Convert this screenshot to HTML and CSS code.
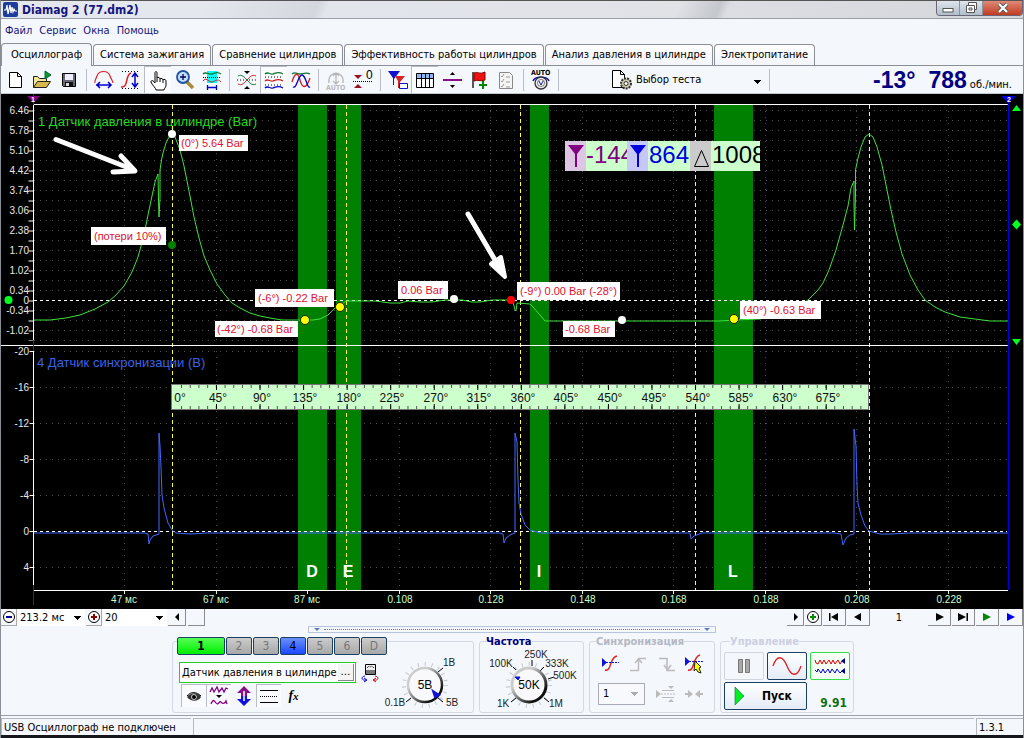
FILE: index.html
```html
<!DOCTYPE html>
<html lang="ru">
<head>
<meta charset="utf-8">
<title>Diamag 2 (77.dm2)</title>
<link rel="stylesheet" href="styles.css">
</head>
<body>
<div class="app">
  <header class="titlebar">
    <svg class="logo" viewBox="0 0 15 15"><rect width="15" height="15" rx="2" fill="#1c3d9c"/><path d="M1 8h2l1-5 1 9 2-9 1 8 1-6 1 5 1-3 1 2h2" fill="none" stroke="#fff" stroke-width="1.2"/></svg>
    <h1>Diamag 2 (77.dm2)</h1>
    <div class="winbtns">
      <button aria-label="Свернуть"><svg viewBox="0 0 12 12"><rect x="1" y="6.500" width="10" height="3.500" fill="#fff" stroke="#555"/></svg></button>
      <button aria-label="Развернуть"><svg viewBox="0 0 12 12"><path d="M3.500 .5h8v7h-8z" fill="#fff" stroke="#555"/><path d="M1.500 3.500h8v7h-8z" fill="#fff" stroke="#555"/><path d="M4 6h3v2H4z" fill="#fff" stroke="#555"/></svg></button>
      <button class="close" aria-label="Закрыть"><svg viewBox="0 0 12 12"><path d="M2 2l8 8M10 2l-8 8" stroke="#555" stroke-width="4"/><path d="M2 2l8 8M10 2l-8 8" stroke="#fff" stroke-width="2.200"/></svg></button>
    </div>
  </header>
  <nav class="menu"><a href="#">Файл</a><a href="#">Сервис</a><a href="#">Окна</a><a href="#">Помощь</a></nav>
  <div class="tabs" role="tablist">
    <button role="tab" aria-selected="true" class="active">Осциллограф</button>
    <button role="tab">Система зажигания</button>
    <button role="tab">Сравнение цилиндров</button>
    <button role="tab">Эффективность работы цилиндров</button>
    <button role="tab">Анализ давления в цилиндре</button>
    <button role="tab">Электропитание</button>
  </div>
  <div class="toolbar">
    <button aria-label="Новый"><svg viewBox="0 0 22 22"><path d="M5.500 3.500h8l4 4v11h-12z" fill="#fff" stroke="#000"/><path d="M13.500 3.500v4h4" fill="none" stroke="#000"/></svg></button>
    <button aria-label="Открыть"><svg viewBox="0 0 22 22"><path d="M2.500 18.500v-11h4l2 2h7v3" fill="#f4e59a" stroke="#222"/><path d="M2.500 18.500l4-6h13l-4 6z" fill="#d8b84c" stroke="#222"/><path d="M14 2l6 4-6 4z" fill="#0a9a20" stroke="#064"/></svg></button>
    <button aria-label="Сохранить"><svg viewBox="0 0 22 22"><path d="M4.500 4.500h13v13h-12l-1-1z" fill="#667" stroke="#000"/><path d="M7 5h8v6H7z" fill="#eef"/><path d="M7 13h8v4H7z" fill="#111"/><path d="M8 14h3v3H8z" fill="#ddd"/></svg></button>
    <span class="sep"></span>
    <button aria-label="Ширина"><svg viewBox="0 0 22 22"><path d="M2 14C1 12 3 10 4 7 6 1 15 1 17 7c1 3 3 5 3 7" fill="none" stroke="#d22" stroke-width="1.200"/><path d="M3 16h15M7 13l-3 3 3 3M15 13l3 3-3 3" fill="none" stroke="#00c" stroke-width="1.500"/></svg></button>
    <button aria-label="Высота"><svg viewBox="0 0 22 22"><path d="M1 18c8 1 4-13 10-14" fill="none" stroke="#d22" stroke-width="1.500"/><path d="M2 2.500h18M2 19.500h18" stroke="#000" stroke-dasharray="1 2"/><path d="M15 4v14M12 8l3-4 3 4M12 14l3 4 3-4" fill="none" stroke="#00c" stroke-width="1.500"/></svg></button>
    <button class="on" aria-label="Рука"><svg viewBox="0 0 22 22"><path d="M8 12V4c0-2 2-2 2 0v5c0-1 3-1 3 1 0-1 3-1 3 1 0-1 3-1 3 1v4c0 3-2 3-2 5H9c0-2-4-5-5-8 0-2 2-2 4 1zM10 9v4M13 10v3M16 11v3" fill="#fff" stroke="#000"/></svg></button>
    <button aria-label="Лупа"><svg viewBox="0 0 22 22"><path d="M13 13l6 6" stroke="#a88b3a" stroke-width="3.500"/><circle cx="9" cy="8" r="6" fill="#bfe0ff" stroke="#22509c" stroke-width="1.800"/><path d="M9 5v6M6 8h6" stroke="#005" stroke-width="1.300"/></svg></button>
    <button aria-label="Область"><svg viewBox="0 0 22 22"><path d="M6 2h10v12H6z" fill="#0ff"/><path d="M2 5c3-3 5 1 9 0s5-3 9 0" fill="none" stroke="#173" stroke-width="1.300"/><path d="M2 8.500h18" stroke="#000" stroke-dasharray="1 1"/><path d="M2 12c3-4 5 0 8 1s6-5 10 0" fill="none" stroke="#c22"/><path d="M6.500 16v5M15.500 16v5M7 18.500h8" stroke="#00c" stroke-width="1.300"/></svg></button>
    <span class="sep"></span>
    <button aria-label="Свести"><svg viewBox="0 0 22 22"><path d="M8 2h6l-3 3zM8 20h6l-3-3z" fill="#000"/><path d="M1 11h20" stroke="#000" stroke-dasharray="1 2"/><path d="M2 7c4-2 6 1 9 4s5 6 9 4" fill="none" stroke="#173"/><path d="M2 15c4 2 6-1 9-4s5-6 9-4" fill="none" stroke="#c22"/></svg></button>
    <button class="on" aria-label="Раздельно"><svg viewBox="0 0 22 22"><path d="M2 5c3-3 5 1 8 0s5-3 10 0" fill="none" stroke="#173" stroke-width="1.300"/><path d="M2 8h18M2 16h18" stroke="#000" stroke-dasharray="1 2"/><path d="M2 12c3-3 5 1 8 0s5-3 10 0" fill="none" stroke="#c22" stroke-width="1.300"/><path d="M2 19c3-3 5 1 8 0s5-3 10 0" fill="none" stroke="#00c" stroke-width="1.300"/></svg></button>
    <button aria-label="Вместе"><svg viewBox="0 0 22 22"><path d="M2 5c3-3 5 0 8 0s6-2 10 0" fill="none" stroke="#173" stroke-width="1.300"/><path d="M2 13c3-10 6-10 8-2s6 10 10-2" fill="none" stroke="#c22" stroke-width="1.300"/><path d="M3 18c4 2 5-12 9-12s5 14 8 12" fill="none" stroke="#00c" stroke-width="1.300"/></svg></button>
    <span class="sep"></span>
    <button aria-label="Авто" disabled><svg viewBox="0 0 22 22"><path d="M4 14C2 1 20 1 18 14M11 4v10M8 7l3-3 3 3M8 12l3 3 3-3" fill="none" stroke="#b9b9b9" stroke-width="1.300"/><text x="1" y="21" class="auto grey">AUTO</text></svg></button>
    <button aria-label="Ноль"><svg viewBox="0 0 22 22"><path d="M2 6h8l-4 4zM2 19h8l-4-4z" fill="#912"/><path d="M1 12.500h20" stroke="#000" stroke-dasharray="1 1"/><text x="14" y="10" class="zero">0</text></svg></button>
    <span class="sep"></span>
    <button aria-label="Маркеры"><svg viewBox="0 0 22 22"><path d="M1 2h12L7 10v6h-1v-7z" fill="#11c"/><path d="M8 7h10l-5 6v6h-2v-7z" fill="#d22"/><path d="M12.500 14.500h8v5h-8z" fill="#fff" stroke="#11c"/></svg></button>
    <button class="on" aria-label="Таблица"><svg viewBox="0 0 22 22"><path d="M2.500 4.500h17v14h-17z" fill="#fff" stroke="#000"/><path d="M3 5h16v4H3z" fill="#8db8f0"/><path d="M2 9.500h18M7.500 5v14M11.500 5v14M15.500 5v14" stroke="#000"/></svg></button>
    <button aria-label="Линия"><svg viewBox="0 0 22 22"><path d="M9 6h5l-2.500-3zM9 16h5l-2.500 3z" fill="#000"/><path d="M2 11h19" stroke="#818" stroke-width="2"/></svg></button>
    <button aria-label="Флаг"><svg viewBox="0 0 22 22"><path d="M5 3v16" stroke="#222" stroke-width="1.500"/><path d="M6 4c4-2 5 2 11-1v8c-5 2-7-1-11 1z" fill="#e11" stroke="#800"/><path d="M15 12v8M11 16h8" stroke="#080" stroke-width="2"/></svg></button>
    <button aria-label="Отчёт" disabled><svg viewBox="0 0 22 22"><path d="M4.500 3.500h10l3 3v13h-13z" fill="#f5f5f5" stroke="#888"/><path d="M6 7l1 1 2-3M6 12l1 1 2-3M6 17l1 1 2-3M11 8h4M11 13h4M11 18h4" fill="none" stroke="#999"/></svg></button>
    <span class="sep"></span>
    <button aria-label="Автонастройка"><svg viewBox="0 0 22 22"><text x="1" y="6" class="auto">AUTO</text><path d="M3 12c2-5 14-5 16 0" fill="none" stroke="#11c" stroke-width="1.500"/><circle cx="11" cy="14" r="6" fill="#eee" stroke="#333" stroke-width="1.300"/><circle cx="11" cy="14" r="3.500" fill="#fff" stroke="#555" stroke-width=".8"/><path d="M9 12l2 4 2-4" fill="none" stroke="#118"/></svg></button>
    <span class="sep"></span>
    <label class="test">
      <svg viewBox="0 0 22 22"><path d="M1.500 1.500h8l4 4v13h-12z" fill="#fff" stroke="#000"/><path d="M9.500 1.500v4h4" fill="none" stroke="#000"/><circle cx="15" cy="14.500" r="5" fill="#ccc9a8" stroke="#333" stroke-width="2" stroke-dasharray="2 1"/><circle cx="15" cy="14.500" r="2" fill="#fff" stroke="#333"/></svg>
      <select aria-label="Тест"><option>Выбор теста</option></select>
    </label>
    <span class="sep"></span>
    <output class="rpm"><b>-13°</b><b>788</b><span>об./мин.</span></output>
  </div>

  <svg class="plot" viewBox="1 94 1022 515" role="img" aria-label="Осциллограмма">
    <rect x="1" y="94" width="1022" height="515" fill="#000"/>
    <g class="grid">
      <path d="M34 110.500H1007M34 120.500H1007M34 130.500H1007M34 140.500H1007M34 150.500H1007M34 160.500H1007M34 170.500H1007M34 180.500H1007M34 190.500H1007M34 200.500H1007M34 210.500H1007M34 220.500H1007M34 230.500H1007M34 240.500H1007M34 250.500H1007M34 260.500H1007M34 270.500H1007M34 280.500H1007M34 290.500H1007M34 310.500H1007M34 320.500H1007M34 330.500H1007M34 340.500H1007"/>
      <path d="M34 351.500H1007M34 387.500H1007M34 423.500H1007M34 459.500H1007M34 495.500H1007M34 567.500H1007"/>
      <path d="M124.500 105V590M216.500 105V590M307.500 105V590M399.500 105V590M490.500 105V590M582.500 105V590M673.500 105V590M765.500 105V590M856.500 105V590M948.500 105V590"/>
    </g>
    <path d="M298 105h29v485h-29zM336 105h25v485h-25zM530 105h19v485h-19zM714 105h39v485h-39z" fill="#008000"/>
    <text x="38" y="126" class="ch ch1">1 Датчик давления в цилиндре (Bar)</text>
    <text x="37" y="367" class="ch ch4">4 Датчик синхронизации (В)</text>
    <path class="cursors" d="M172.500 105V590M346.500 105V590M520.500 105V590M695.500 105V590M869.500 105V590"/>
    <path class="zeroline" d="M34 300.500H1007M34 531.500H1007"/>
    <path class="trace t1" d="M34 320H50L66 318 80 315 95 309 108 302 116 295 124 286 132 272 138 257 144 235 148 215 152 196 155 182 158 174 158.500 200 159 217 160 198V170L161.500 160 163 153 166 143 169 137 172 134 175 137 180 150 184 166 189 191 194 217 199 238 204 256 210 270 217 284 225 295 232 303 240 308 250 313 260 316 270 318 282 320H313L320 319 328 315 335 308 342 304 346 301H375L390 303 400 303 408 301 420 302H432L445 300H462L472 302H480L492 300H510L513 302 515 310 516 311 517 303 530 304 533 307 540 315 545 321H614L640 321H720L735 320 760 319 780 313 800 305 808 300 818 290 823 283 829 270 836 250 843 225 848 206 851 188 854 181V203L854.500 230 855.500 195 855.500 170 858 158 861 147 865 137 869 134 873 137 877 147 882 165 886 185 891 210 896 232 902 254 910 275 918 290 925 300 935 307 945 312 960 317 975 319 990 321H1008"/>
    <path class="trace t4" d="M34 533H145L148 534 149 544 150 540 153 536 159 534V433L160 446 161 467 162 495 164 508 168 523 172 530 176 533 190 534 207 533H500L503 534 504 543 506 538 510 535 515 533V433L517 442 518 480 519 503 521 514 525 525 530 530 540 533H690L691 539 694 536 702 533H835L841 534 843 545 846 538 850 535 854 534V429L856 446 857 485 858 503 861 515 865 526 869 531 880 534H890L910 533H1008"/>
    <path d="M33.500 105V590.500M33 590.500H1008M33 104.500H1008M1 345.500H1008" stroke="#fff" fill="none"/>
    <path d="M31 110.500V341" stroke="#fff" stroke-width="5" stroke-dasharray="1 9"/>
    <path d="M31.500 351V568" stroke="#fff" stroke-width="4" stroke-dasharray="1 35"/>
    <path d="M33.500 94V105M33.500 340v11M33.500 585v20" stroke="#800080"/>
    <path d="M1008.500 100V590" stroke="#0000d8" stroke-width="1.500"/>
    <path d="M27 96h13l-6.500 7z" fill="#800080"/><text x="31" y="102" class="flag">1</text>
    <path d="M1001 96h15l-7.500 7z" fill="#0000e0"/><text x="1007" y="102" class="flag">2</text>
    <path d="M1012 111h9l-4.500-6zM1012 339h9l-4.500 6zM1016.500 219.500l4.500 5-4.500 5-4.500-5z" fill="#00ff20"/>
    <circle cx="8.500" cy="300" r="4" fill="#00ff20"/>
    <g class="yaxis">
      <text x="29" y="114">6.46</text><text x="29" y="134">5.78</text><text x="29" y="154">5.10</text><text x="29" y="174">4.42</text><text x="29" y="194">3.74</text><text x="29" y="214">3.06</text><text x="29" y="234">2.38</text><text x="29" y="254">1.70</text><text x="29" y="274">1.02</text><text x="29" y="294">0.34</text><text x="29" y="304">0</text><text x="29" y="314">-0.34</text><text x="29" y="334">-1.02</text>
      <text x="29" y="355">-20</text><text x="29" y="391">-16</text><text x="29" y="427">-12</text><text x="29" y="463">-8</text><text x="29" y="499">-4</text><text x="29" y="535">0</text><text x="29" y="571">4</text>
    </g>
    <path d="M124.500 591v3M216.500 591v3M307.500 591v3M399.500 591v3M490.500 591v3M582.500 591v3M673.500 591v3M765.500 591v3M856.500 591v3M948.500 591v3" stroke="#ccffcc"/>
    <g class="xaxis">
      <text x="124" y="603">47 мс</text><text x="216" y="603">67 мс</text><text x="307" y="603">87 мс</text><text x="400" y="603">0.108</text><text x="491" y="603">0.128</text><text x="583" y="603">0.148</text><text x="674" y="603">0.168</text><text x="766" y="603">0.188</text><text x="857" y="603">0.208</text><text x="949" y="603">0.228</text>
    </g>
    <g class="phase"><text x="312" y="577">D</text><text x="348" y="577">E</text><text x="539" y="577">I</text><text x="733" y="577">L</text></g>
    <rect x="171.500" y="384.500" width="697" height="25" fill="#ccffcc" stroke="#777"/>
    <path d="M181 386.500H868M181 407.500H868" stroke="#555" stroke-width="3" stroke-dasharray="1 7.710"/>
    <path d="M216 387.500H868M216 406.500H868" stroke="#000" stroke-width="5" stroke-dasharray="1 42.550"/>
    <g class="ruler">
      <text x="180" y="402">0°</text><text x="218" y="402">45°</text><text x="262" y="402">90°</text><text x="305" y="402">135°</text><text x="349" y="402">180°</text><text x="392" y="402">225°</text><text x="436" y="402">270°</text><text x="479" y="402">315°</text><text x="523" y="402">360°</text><text x="566" y="402">405°</text><text x="610" y="402">450°</text><text x="654" y="402">495°</text><text x="698" y="402">540°</text><text x="741" y="402">585°</text><text x="785" y="402">630°</text><text x="828" y="402">675°</text>
    </g>
    <rect x="565" y="141" width="195" height="30" fill="#ccffcc"/>
    <path d="M565 141h21v30h-21z" fill="#dcc6e4"/><path d="M627 141h21v30h-21z" fill="#c8c8f8"/><path d="M690 141h21v30h-21z" fill="#cbcbcb"/>
    <path d="M568 145h16l-7 9v13h-2v-13z" fill="#800080"/><path d="M630 145h16l-7 9v13h-2v-13z" fill="#0000e0"/><path d="M694.500 166.500l7-16 7 16z" fill="none" stroke="#000"/>
    <svg x="586" y="141" width="41" height="30"><text x="0" y="22" class="meas m1">-144</text></svg>
    <text x="649" y="163" class="meas m2">864</text>
    <svg x="712" y="141" width="48" height="30"><text x="0" y="22" class="meas">1008</text></svg>
    <g fill="#fff">
      <path d="M179 135h69v16h-69zM91 227h75v18H91zM255 289h79v18h-79zM215 321h83v16h-83zM398 281h50v18h-50zM517 282h103v18H517zM563 321h52v16h-52zM740 301h81v18h-81z"/>
    </g>
    <g class="call">
      <text x="181" y="147">(0°) 5.64 Bar</text><text x="94" y="240">(потери 10%)</text><text x="258" y="302">(-6°) -0.22 Bar</text><text x="217" y="333">(-42°) -0.68 Bar</text><text x="401" y="294">0.06 Bar</text><text x="520" y="295">(-9°) 0.00 Bar (-28°)</text><text x="565" y="333">-0.68 Bar</text><text x="743" y="314">(40°) -0.63 Bar</text>
    </g>
    <g fill="#fff"><circle cx="172" cy="134" r="4"/><circle cx="454" cy="299" r="4"/><circle cx="622" cy="320" r="4"/></g>
    <circle cx="172" cy="245" r="4" fill="#008000"/><circle cx="511" cy="300" r="4" fill="#f00"/>
    <g fill="#ff0" stroke="#220"><circle cx="305" cy="320" r="4.500"/><circle cx="340" cy="307" r="4.500"/><circle cx="734" cy="319" r="4.500"/></g>
    <g stroke="#fff" stroke-width="5" stroke-linecap="round" stroke-linejoin="round" fill="none">
      <path d="M56 139.500L134 170M121 156l14 15-22 1"/>
      <path d="M468 214l34 58" /><path d="M491 264l14 13-4-20z" fill="#fff" stroke-width="4"/>
    </g>
  </svg>

  <div class="nav">
    <button class="flat" aria-label="Сжать"><svg viewBox="0 0 14 14"><circle cx="7" cy="7" r="5.500" fill="#fff" stroke="#000"/><path d="M4 7h6" stroke="#008" stroke-width="2"/></svg></button>
    <select class="w1" aria-label="Длительность"><option>213.2 мс</option></select>
    <button class="flat" aria-label="Растянуть"><svg viewBox="0 0 14 14"><circle cx="7" cy="7" r="5.500" fill="#fff" stroke="#000"/><path d="M4 7h6M7 4v6" stroke="#800" stroke-width="2"/></svg></button>
    <select class="w2" aria-label="Шаг"><option>20</option></select>
    <button class="sb" aria-label="Влево"><svg viewBox="0 0 14 14"><path d="M9 3v8L5 7z"/></svg></button>
    <button class="sb" aria-label="Положение"></button>
    <span class="grow"></span>
    <button class="sb" aria-label="Вправо"><svg viewBox="0 0 14 14"><path d="M6 3v8l4-4z"/></svg></button>
    <button class="sb" aria-label="Добавить"><svg viewBox="0 0 14 14"><circle cx="7" cy="7" r="5.500" fill="#fff" stroke="#000"/><path d="M4 7h6M7 4v6" stroke="#080" stroke-width="2"/></svg></button>
    <button class="sb wide" aria-label="Начало"><svg viewBox="0 0 14 14"><path d="M2 3h1.500v8H2zM11 3v8L4 7z"/></svg></button>
    <button class="sb wide" aria-label="Назад"><svg viewBox="0 0 14 14"><path d="M10 3v8L3 7z"/></svg></button>
    <output class="page">1</output>
    <button class="sb wide" aria-label="Вперёд"><svg viewBox="0 0 14 14"><path d="M4 3v8l8-4z"/></svg></button>
    <button class="sb wide" aria-label="Конец"><svg viewBox="0 0 14 14"><path d="M12 3h-1.500v8H12zM2 3v8l8-4z"/></svg></button>
    <button class="sb wide" aria-label="Пуск просмотра"><svg viewBox="0 0 14 14"><path d="M3 3v8l8-4z" fill="#080"/></svg></button>
    <button class="sb wide" aria-label="Просмотр"><svg viewBox="0 0 14 14"><path d="M3 3v8l8-4z" fill="#00e"/></svg></button>
  </div>
  <div class="splitter"><i></i><span></span><i></i></div>

  <div class="panels">
    <section class="group channels">
      <div class="chcol">
        <div class="chbtns"><button class="c1">1</button><button>2</button><button>3</button><button class="c4">4</button><button>5</button><button>6</button><button>D</button></div>
        <div class="sensor">
          <div class="field"><input type="text" aria-label="Датчик" value="Датчик давления в цилиндре"><button aria-label="Выбрать">…</button></div>
          <svg viewBox="0 0 18 20"><path d="M4.500 1.500h10v10h-10z" fill="#eee" stroke="#000"/><path d="M5 7h9v4H5z" fill="#777"/><path d="M6 5l2-2 1 1 2-1 2 2" fill="none" stroke="#000" stroke-dasharray="1 1"/><path d="M4 13c-5 1-3 5 1 4M3 15l3 2-3 2" fill="none" stroke="#00c"/><path d="M14 13c5 1 3 5-1 4M15 15l-3 2 3 2" fill="none" stroke="#d00"/></svg>
        </div>
        <div class="tools">
          <button class="on" aria-label="Показать"><svg viewBox="0 0 22 22"><path d="M4 12c4-5 11-5 14 0-3 5-10 5-14 0z" fill="#333"/><path d="M4 11c4-5 10-4 14 0" fill="none" stroke="#000"/><circle cx="11" cy="12" r="2.500" stroke="#ccc"/></svg></button>
          <button class="on" aria-label="Фильтр"><svg viewBox="0 0 22 22"><path d="M2 7l2-4 2 4 3-5 2 5 3-4 2 4 2-4 2 1M3 19c2-5 3-4 5-1s4-3 5-1 4 2 5-1l1 3" fill="none" stroke="#808" stroke-width="1.300"/><path d="M8 10h6l-3 3z"/></svg></button>
          <button aria-label="Инверсия"><svg viewBox="0 0 22 22"><path d="M11 1l7 7h-4v4H8V8H4z" fill="#818"/><path d="M11 21l7-7h-4v-3H8v3H4z" fill="#11d"/><path d="M11 6v10" stroke="#fff" stroke-width="1.500"/></svg></button>
          <button class="on" aria-label="Уровни"><svg viewBox="0 0 22 22"><path d="M2 5.500h18M2 17.500h18" stroke="#000"/><path d="M2 11.500h18" stroke="#000" stroke-dasharray="1 1"/></svg></button>
          <button aria-label="Формула"><span class="fx">f<small>x</small></span></button>
        </div>
      </div>
      <svg class="knob" viewBox="7 0 85 72">
        <defs><linearGradient id="rim" x1="0" y1="0" x2="1" y2="1"><stop offset=".3" stop-color="#ccc"/><stop offset=".8" stop-color="#111"/></linearGradient></defs>
        <circle cx="44" cy="45" r="21" class="ticks"/><path d="M57 32l5-4M30 58l-5 4M57 58l5 4" stroke="#000"/>
        <circle cx="44" cy="45" r="17" fill="#f9f9fb" stroke="url(#rim)" stroke-width="2.500"/><path d="M52 51l6 4-4 2z" fill="#11d" stroke="#11d" stroke-width="2"/>
        <text x="44" y="49" class="val">5В</text><text x="68" y="26">1В</text><text x="14" y="66">0.1В</text><text x="71" y="66">5В</text>
      </svg>
    </section>
    <fieldset class="group freq"><legend>Частота</legend>
      <svg class="knob" viewBox="0 0 102 70">
        <circle cx="49" cy="43" r="21" class="ticks"/><path d="M36 28l-3-3M52 24v-6M60 29l4-4M68 37l6-2M36 56l-5 4M64 56l5 4" stroke="#000"/>
        <circle cx="49" cy="43" r="17" fill="#f9f9fb" stroke="url(#rim)" stroke-width="3"/><path d="M35 35h5l-2 3z" fill="#11d" stroke="#11d"/>
        <text x="49" y="47" class="val">50K</text><text x="56" y="16">250K</text><text x="21" y="25">100K</text><text x="77" y="25">333K</text><text x="85" y="37">500K</text><text x="23" y="65">1K</text><text x="76" y="65">1M</text>
      </svg>
    </fieldset>
    <fieldset class="group sync"><legend>Синхронизация</legend>
      <div class="row">
        <button aria-label="Уровень"><svg viewBox="0 0 22 22"><path d="M5 17c7 2 4-13 12-14" fill="none" stroke="#d22" stroke-width="1.500"/><path d="M2 5v9l5-4.500z" fill="#11d"/><path d="M6 9.500h13" stroke="#11d" stroke-dasharray="2 1"/></svg></button>
        <button aria-label="Фронт" disabled><svg viewBox="0 0 22 22"><path d="M2 17.500h9M10.500 17V5.500H18M7 10l3.500-4 3.500 4" fill="none" stroke="#bbb" stroke-width="1.500"/></svg></button>
        <button aria-label="Спад" disabled><svg viewBox="0 0 22 22"><path d="M3 5.500h8V17.500h8M8 12l3.500 5 3.500-5" fill="none" stroke="#bbb" stroke-width="1.500"/></svg></button>
        <button aria-label="Автоуровень"><svg viewBox="0 0 22 22"><path d="M4 17c7 2 4-13 12-15" fill="none" stroke="#d22" stroke-width="1.500"/><path d="M1 4v9l5-4.500z" fill="#11d"/><path d="M5 8.500h14" stroke="#11d" stroke-dasharray="2 1"/><path d="M11 8l6 6-2 1 2 5-3-1-2-3-2 2z" fill="#ff0" stroke="#222"/></svg></button>
      </div>
      <div class="row">
        <select aria-label="Канал" disabled><option>1</option></select>
        <button aria-label="Зона" disabled><svg viewBox="0 0 22 22"><path d="M1 7v8l5-4zM13 3h6l-3 3zM13 19h6l-3-3z" fill="#bbb"/><path d="M7 7.500h12M7 14.500h12" stroke="#bbb"/><path d="M6 11h14" stroke="#bbb" stroke-dasharray="2 1"/></svg></button>
        <button aria-label="Сдвиг" disabled><svg viewBox="0 0 22 22"><path d="M2 11h4M20 11h-4" stroke="#bbb" stroke-width="2"/><path d="M5 7l5 4-5 4zM17 7l-5 4 5 4z" fill="#bbb"/></svg></button>
      </div>
    </fieldset>
    <fieldset class="group ctl"><legend>Управление</legend>
      <button class="p" aria-label="Пауза" disabled><svg viewBox="0 0 32 24"><path d="M10.500 5.500h4v13h-4zM17.500 5.500h4v13h-4z" fill="#aaa" stroke="#777"/></svg></button>
      <button class="b" aria-label="Один кадр"><svg viewBox="0 0 32 24"><path d="M2 12C6 0 12 2 16 12s10 12 14 0" fill="none" stroke="#d22" stroke-width="1.300"/></svg></button>
      <button class="g" aria-label="Непрерывно"><svg viewBox="0 0 32 24"><path d="M1 6l1 3 2 1 2-4 2 4 2-4 2 4 3-4 2 4 2-4 2 4 3-4 2 4 2-3" fill="none" stroke="#d00"/><path d="M1 16l2 2 1-3 3 4 2-4 2 4 3-4 2 4 2-4 3 4 2-4 3 4 2-2" fill="none" stroke="#00c"/><path d="M31 4v6l-4-3zM31 14v6l-4-3z" fill="#008"/></svg></button>
      <button class="b run"><svg viewBox="0 0 12 20"><path d="M1 1l9 9-9 9z" fill="#0e2" stroke="#073" stroke-width=".6"/></svg><span>Пуск</span></button>
      <output>9.91</output>
    </fieldset>
  </div>
  <footer class="status"><span class="s1">USB Осциллограф не подключен</span><span class="s2"></span><span class="s3">1.3.1</span></footer>
</div>
</body>
</html>
```
FILE: styles.css
```css
* { box-sizing: border-box; }
body { margin: 0; background: #f4f7fc; font: 11px/14px "DejaVu Sans Condensed", "Noto Sans", sans-serif; color: #000; }
button, select, input, output { font: inherit; color: inherit; }
button { padding: 0; border: 0; background: none; display: flex; align-items: center; justify-content: center; }
select { appearance: none; border: 0; border-radius: 0; opacity: 1; color: #000; background: #fff; }
svg { display: block; flex: none; }
.app { border: solid #888d96; border-width: 0 1px; background: #f4f7fc; }

.titlebar { display: flex; height: 19px; gap: 4px; padding-left: 2px; align-items: center; background: linear-gradient(115deg, #e4e7ee 20%, #d4d7de 31%, #e2e5ec 32%, #e0e2e6 66%, #c4c7cc 70%, #dcdee3 71%, #d4d6da); border-top: 1px solid #555; border-bottom: 1px solid #9aa0aa; }
.logo { width: 15px; height: 15px; }
.titlebar h1 { margin: 0; flex: 1; font-size: 12px; line-height: 16px; color: #15157a; }
.winbtns { display: flex; align-self: flex-start; height: 15px; border: 1px solid #667; border-top: 0; border-radius: 0 0 4px 4px; overflow: hidden; }
.winbtns button { width: 23px; background: linear-gradient(#dfe5ec, #b0bdca); border-right: 1px solid #8894a0; }
.winbtns .close { width: 39px; border: 0; background: linear-gradient(#e08a78, #c03a20); }
.winbtns svg { width: 12px; height: 12px; }

.menu { display: flex; gap: 7px; height: 24px; padding-left: 4px; align-items: center; }
.menu a { color: #15157a; text-decoration: none; }

.tabs { display: flex; height: 23px; gap: 1px; align-items: flex-end; border-bottom: 1px solid #8a8f98; }
.tabs button { height: 21px; padding: 0 6px; border: 1px solid #8a8f98; border-bottom: 0; border-radius: 4px 4px 0 0; background: linear-gradient(#fff, #f3f5fa); white-space: nowrap; }
.tabs .active { height: 23px; padding: 0 9px; margin-bottom: -1px; background: #f4f7fc; }

.toolbar { display: flex; height: 28px; align-items: center; border-bottom: 1px solid #c4c8d0; }
.toolbar button { width: 27px; height: 27px; }
.toolbar button svg { width: 22px; height: 22px; }
.on { border: solid #b8bcc6; border-width: 1px 0 0 1px; background: #fafbfe; }
.sep { width: 8px; height: 22px; background: linear-gradient(#b8bcc6, #b8bcc6) center / 1px 100% no-repeat; }
.auto { font: bold 7px "DejaVu Sans Condensed", sans-serif; }
.grey { fill: #b9b9b9; }
.zero { font: 12px "Liberation Sans", sans-serif; }
.test { display: flex; width: 203px; padding-left: 49px; gap: 3px; align-items: center; }
.test svg { width: 22px; height: 22px; }
select { background-image: linear-gradient(#000, #000), linear-gradient(#000, #000), linear-gradient(#000, #000), linear-gradient(#000, #000); background-size: 7px 1px, 5px 1px, 3px 1px, 1px 1px; background-position: right 4px top 7px, right 5px top 8px, right 6px top 9px, right 7px top 10px; background-repeat: no-repeat; }
.test select { flex: 1; min-width: 0; background-color: transparent; padding: 0; }
.rpm { flex: 1; display: flex; justify-content: flex-end; align-items: baseline; padding-right: 11px; }
.rpm b { margin-right: 13px; color: #000080; font: bold 23px/26px "Liberation Sans", sans-serif; }
.rpm b + b { margin-right: 3px; }

.plot { width: 100%; height: auto; }
.plot text, .knob text { font-family: "Liberation Sans", Arial, sans-serif; }
.grid { stroke: #4c4c4c; stroke-dasharray: 1 5; fill: none; }
.cursors { stroke: #ffff40; stroke-dasharray: 4 3; }
.zeroline { stroke: #fff; stroke-dasharray: 3 3; }
.trace { fill: none; stroke-width: 1; }
.t1 { stroke: #3fe03f; }
.t4 { stroke: #4169ff; }
.plot .ch { font-size: 13px; }
.ch1 { fill: #24d824; }
.ch4 { fill: #3a62e8; }
.plot .flag { font-size: 7px; font-weight: bold; fill: #fff; }
.yaxis { font-size: 10px; fill: #e8e8e8; text-anchor: end; }
.xaxis { font-size: 10px; fill: #ccffcc; text-anchor: middle; }
.phase { font-size: 16px; font-weight: bold; fill: #fff; text-anchor: middle; }
.ruler { font-size: 12px; fill: #111; text-anchor: middle; }
.meas { font-size: 24px; fill: #000; }
.m1 { fill: #800080; }
.m2 { fill: #0000e0; }
.call { font-size: 11px; fill: #e01030; }

.nav { display: flex; height: 17px; align-items: stretch; gap: 1px; }
.nav svg { width: 14px; height: 14px; }
.nav .flat { width: 16px; border: solid #aaa; border-width: 0 1px 1px 0; }
.nav select { padding: 0 0 0 2px; }
.w1 { width: 67px; }
.w2 { width: 64px; }
.sb { width: 17px; border: solid #8c8c8c; border-width: 0 1px 1px 0; }
.w2 + .sb { width: 18px; margin-right: 1px; }
.wide { width: 23px; }
.grow { flex: 1; }
.page { width: 56px; text-align: center; line-height: 17px; }
.splitter { display: flex; align-items: center; justify-content: space-between; width: 40%; height: 7px; margin-left: 30%; border: 1px solid #b8c4de; padding: 0 5px; }
.splitter span { flex: 1; margin: 0 4px; border-top: 1px dotted #5c7cc0; }
.splitter i { border: 3px solid transparent; border-top-color: #5c7cc0; border-bottom: 0; }

.panels { display: flex; gap: 5px; padding: 8px 0 2px 171px; align-items: flex-end; border-bottom: 1px solid #9a9fa8; }
.group { margin: 0; padding: 0; min-width: 0; height: 72px; border: 1px solid #d4d9e4; border-radius: 3px; }
legend { padding: 0; margin-left: 6px; font-weight: bold; line-height: 0; height: 0; }
.channels { display: flex; width: 302px; align-items: flex-end; }
.chcol { width: 215px; padding: 0 0 2px 4px; }
.chbtns { display: flex; gap: 1px; }
.chbtns button { width: 26px; height: 18px; border: 1px solid #1c3f66; border-radius: 2px; background: linear-gradient(#ccc, #a8a8a8); color: #777; font-size: 12px; }
.chbtns .c1 { width: 48px; background: linear-gradient(#5f5, #0e0); color: #000; font-weight: bold; }
.chbtns .c4 { background: linear-gradient(#6a90ff, #1a48ff); color: #000; }
.sensor { display: flex; gap: 5px; align-items: center; margin: 7px 0 1px 2px; }
.sensor svg { width: 18px; height: 20px; }
.field { display: flex; width: 177px; height: 21px; border: 1px solid #2c2; background: #fff; }
.field input { flex: 1; min-width: 0; border: 0; padding: 0 0 0 2px; background: none; }
.field button { width: 16px; margin: 1px; border: solid #888; border-width: 0 1px 1px 0; background: #f4f4f4; line-height: 8px; }
.tools { display: flex; padding: 0 0 3px 4px; }
.tools button { width: 25px; height: 23px; }
.tools svg { width: 22px; height: 22px; }
.fx { font: italic bold 14px "Liberation Serif", serif; }
.fx small { font-size: 11px; }
.knob { overflow: visible; }
.knob text { font-size: 10px; text-anchor: middle; fill: #222; }
.knob .val { font-size: 12px; fill: #000; }
.ticks { fill: none; stroke: #c4c8d0; stroke-width: 4; stroke-dasharray: 1 6; }
.channels .knob { width: 85px; height: 72px; }
.freq { width: 105px; }
.freq .knob { width: 102px; height: 70px; }
.freq legend { color: #000080; }
.sync { width: 126px; }
.sync legend, .ctl legend { color: #b4b8c4; }
.ctl legend { color: #ccd0e0; }
.row { display: flex; padding: 11px 0 0 8px; gap: 3px; }
.row + .row { padding-top: 8px; }
.row button { width: 25px; height: 22px; }
.row svg { width: 22px; height: 22px; }
.row select { width: 47px; height: 22px; margin-right: 5px; padding-left: 4px; border: 1px solid #aab; background-color: #f8f9fc; background-image: linear-gradient(#aaa, #aaa), linear-gradient(#aaa, #aaa), linear-gradient(#aaa, #aaa), linear-gradient(#aaa, #aaa); background-position: right 6px top 8px, right 7px top 9px, right 8px top 10px, right 9px top 11px; }
.ctl[class] { display: grid; width: 134px; grid-template-columns: 40px 40px 40px; gap: 2px 3px; padding: 10px 3px 0; align-content: start; }
.ctl button { height: 28px; border: 1px solid #d0d4de; border-radius: 2px; }
.ctl svg { width: 32px; height: 24px; }
.ctl .b { border-color: #1c3f66; background: linear-gradient(#fff, #e4ecf8); }
.ctl .g { border-color: #3d4; background: #f6fff6; }
.ctl .run { grid-column: span 2; gap: 16px; justify-content: flex-start; padding-left: 9px; font-weight: bold; font-size: 12px; }
.ctl .run svg { width: 12px; height: 20px; }
.ctl output { align-self: end; padding-right: 3px; text-align: right; font-weight: bold; font-size: 12px; color: #107010; }

.status { display: flex; gap: 2px; height: 23px; padding-top: 2px; border-bottom: 4px solid #14161c; line-height: 17px; }
.status span { border: solid #b4b8c0; border-width: 1px 0 0 1px; padding-left: 2px; }
.s1 { width: 190px; white-space: nowrap; }
.s2 { flex: 1; }
.s3 { width: 47px; }
```
